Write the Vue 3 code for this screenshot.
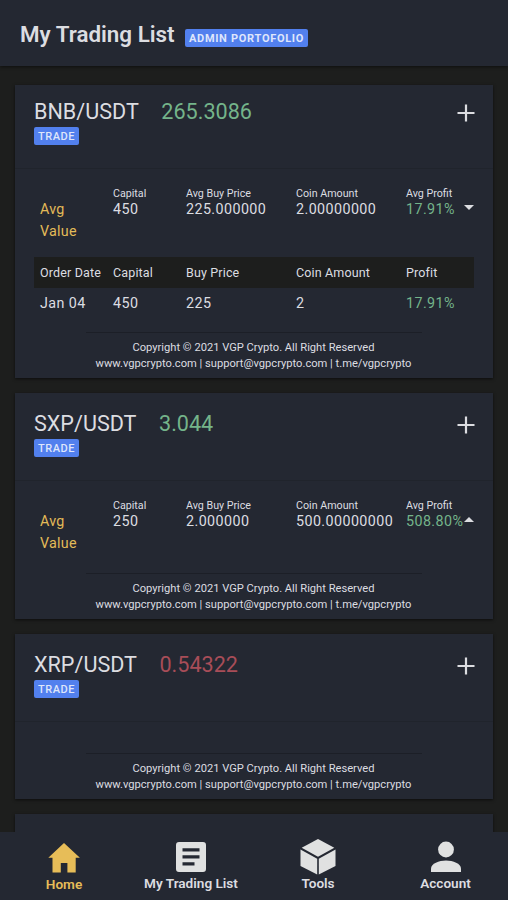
<script setup>
import { ref } from "vue";

const activeTab = ref("home");

const pairs = ref([
  {
    name: "BNB/USDT",
    price: "265.3086",
    trend: "up",
    opened: true,
    avg: { capital: "450", price: "225.000000", amount: "2.00000000", profit: "17.91%" },
    orders: [{ date: "Jan 04", capital: "450", price: "225", amount: "2", profit: "17.91%" }],
  },
  {
    name: "SXP/USDT",
    price: "3.044",
    trend: "up",
    opened: false,
    avg: { capital: "250", price: "2.000000", amount: "500.00000000", profit: "508.80%" },
    orders: [],
  },
  { name: "XRP/USDT", price: "0.54322", trend: "down", opened: false, avg: null, orders: [] },
]);

const tabs = [
  { id: "home", label: "Home" },
  { id: "list", label: "My Trading List" },
  { id: "tools", label: "Tools" },
  { id: "account", label: "Account" },
];

const toggle = (pair) => {
  pair.opened = !pair.opened;
};
</script>

<template>
  <div class="screen">
    <header class="top-bar">
      <h1>My Trading List</h1>
      <span class="badge badge-admin">ADMIN PORTOFOLIO</span>
    </header>

    <main class="list">
      <section v-for="pair in pairs" :key="pair.name" class="card">
        <div class="card-header">
          <div>
            <div class="pair">
              <span class="pair-name">{{ pair.name }}</span>
              <span class="pair-price" :class="pair.trend">{{ pair.price }}</span>
            </div>
            <span class="badge">TRADE</span>
          </div>
          <svg class="plus" viewBox="0 0 18 18">
            <path d="M9 .5v17M.5 9h17" />
          </svg>
        </div>

        <div class="card-body" :class="{ opened: pair.opened, empty: !pair.avg }">
          <div v-if="pair.avg" class="row avg-row" @click="toggle(pair)">
            <div class="avg-title">Avg Value</div>
            <div>
              <small>Capital</small>
              <span>{{ pair.avg.capital }}</span>
            </div>
            <div>
              <small>Avg Buy Price</small>
              <span>{{ pair.avg.price }}</span>
            </div>
            <div>
              <small>Coin Amount</small>
              <span>{{ pair.avg.amount }}</span>
            </div>
            <div class="avg-profit">
              <div>
                <small>Avg Profit</small>
                <span class="up">{{ pair.avg.profit }}</span>
              </div>
              <i class="arrow" :class="{ down: pair.opened }"></i>
            </div>
          </div>

          <template v-if="pair.opened">
            <div class="row orders-head">
              <span>Order Date</span>
              <span>Capital</span>
              <span>Buy Price</span>
              <span>Coin Amount</span>
              <span>Profit</span>
            </div>
            <div v-for="order in pair.orders" :key="order.date" class="row order">
              <span>{{ order.date }}</span>
              <span>{{ order.capital }}</span>
              <span>{{ order.price }}</span>
              <span>{{ order.amount }}</span>
              <span class="up">{{ order.profit }}</span>
            </div>
          </template>
        </div>

        <footer class="card-footer">
          <p class="copyright">Copyright © 2021 VGP Crypto. All Right Reserved</p>
          <p class="links">www.vgpcrypto.com | support@vgpcrypto.com | t.me/vgpcrypto</p>
        </footer>
      </section>

      <section class="card next-card"></section>
    </main>

    <nav class="bottom-nav">
      <a
        v-for="tab in tabs"
        :key="tab.id"
        class="tab"
        :class="[tab.id, { active: activeTab === tab.id }]"
        @click="activeTab = tab.id"
      >
        <svg v-if="tab.id === 'home'" viewBox="0 0 36 36">
          <path d="M18 4 2.300 18.800h4.200V33.500h8.300v-9.600h6.600v9.600h8.300V18.800h4.200z" />
        </svg>
        <svg v-else-if="tab.id === 'list'" viewBox="0 0 36 36">
          <path
            fill-rule="evenodd"
            d="M6 3h24a3 3 0 0 1 3 3v24a3 3 0 0 1-3 3H6a3 3 0 0 1-3-3V6a3 3 0 0 1 3-3zm3.500 6.300v3.200h17V9.300zm0 7v3.200h17v-3.200zm0 7v3.200h12v-3.200z"
          />
        </svg>
        <svg v-else-if="tab.id === 'tools'" viewBox="0 0 36 36">
          <path d="M18 0 34.300 8.700 18 17.800 1.700 8.700z" />
          <path d="M.5 10.500 17.200 19.700V35.500L.5 27z" />
          <path d="M35.500 10.500 18.800 19.700V35.500L35.500 27z" />
        </svg>
        <svg v-else viewBox="0 0 36 36">
          <circle cx="18" cy="10.500" r="7.900" />
          <path d="M3 33v-3.500c0-5 8-8 15-8s15 3 15 8V33z" />
        </svg>
        <span>{{ tab.label }}</span>
      </a>
    </nav>
  </div>
</template>

<style>
body {
  background-color: #1d1e1d;
  overflow: hidden;
}
</style>

<style scoped>
.screen {
  display: flex;
  flex-direction: column;
  height: 900px;
  overflow: hidden;
  background-color: #1d1e1d;
  color: #dcdde1;
  font-family: Roboto, "Liberation Sans", sans-serif;
}

.top-bar {
  display: flex;
  flex: none;
  align-items: flex-start;
  height: 66px;
  box-sizing: border-box;
  padding: 20px 20px 0;
  background-color: #242832;
  box-shadow: 0 1px 3px rgba(0, 0, 0, 0.5);
}

h1 {
  width: 155px;
  margin: 0;
  font-size: 22.4px;
  line-height: 28px;
  font-weight: 600;
  white-space: nowrap;
}

.badge {
  display: block;
  width: 45px;
  height: 18px;
  border-radius: 2px;
  background-color: #5280ee;
  color: #dfe6fb;
  font-size: 11px;
  line-height: 19px;
  font-weight: 500;
  letter-spacing: 0.5px;
  text-align: center;
  white-space: nowrap;
}

.badge-admin {
  width: 123px;
  margin: 9px 0 0 10px;
  font-weight: 700;
  letter-spacing: 0.7px;
}

.list {
  flex: 1;
  min-height: 0;
  overflow: hidden;
  padding: 19px 15px 0;
}

.card {
  margin-bottom: 15px;
  background-color: #242832;
  box-shadow: 0 1px 3px rgba(0, 0, 0, 0.6);
}

.card-header {
  display: flex;
  justify-content: space-between;
  height: 88px;
  box-sizing: border-box;
  padding: 18px 18px 0 19px;
  border-bottom: 1px solid #20242c;
}

.card:first-child .card-header {
  height: 84px;
  padding-top: 14px;
}

.pair {
  display: flex;
  gap: 22.5px;
  font-size: 21.6px;
  line-height: 26px;
  white-space: nowrap;
}

.card-header .badge {
  margin-top: 2px;
}

.up {
  color: #74b48a;
}

.pair-price.down {
  color: #a84d58;
}

.plus {
  width: 18px;
  height: 18px;
  margin-top: 5px;
  fill: none;
  stroke: #dcdde1;
  stroke-width: 2.2;
}

.card-body {
  height: 92px;
  box-sizing: border-box;
  padding: 16px 19px 0;
}

.card-body.opened {
  height: 163px;
}

.card-body.empty {
  height: 31px;
}

.row {
  display: grid;
  grid-template-columns: 73px 73px 110px 110px 1fr;
  padding-left: 6px;
  font-size: 14.3px;
  letter-spacing: 0.42px;
  white-space: nowrap;
}

.avg-row {
  height: 56px;
}

.avg-row small {
  display: block;
  font-size: 10.7px;
  line-height: 17px;
  letter-spacing: 0;
}

.avg-row span {
  display: block;
  line-height: 15px;
}

.avg-title {
  width: 40px;
  padding-top: 13px;
  color: #e3bb58;
  line-height: 22px;
  letter-spacing: 0.25px;
  white-space: normal;
}

.avg-profit {
  display: flex;
  justify-content: space-between;
}

.arrow {
  width: 0;
  height: 0;
  margin: 20px 0 0 -10px;
  border-left: 5px solid transparent;
  border-right: 5px solid transparent;
  border-bottom: 5px solid #dcdde1;
}

.arrow.down {
  border-top: 5px solid #dcdde1;
  border-bottom: 0;
}

.orders-head {
  height: 31px;
  margin-top: 16px;
  background-color: #1d1e1d;
  font-size: 12.5px;
  line-height: 32px;
  letter-spacing: 0.15px;
}

.order {
  line-height: 30px;
}

.card-footer {
  height: 46px;
  box-sizing: border-box;
  padding-top: 8px;
  font-size: 11.15px;
  line-height: 16px;
  text-align: center;
  white-space: nowrap;
}

.card-footer::before {
  content: "";
  display: block;
  width: 336px;
  height: 1px;
  margin: -8px auto 7px;
  background-color: #1c1f27;
}

.card-footer p {
  margin: 0 1px 0 0;
}

.next-card {
  height: 60px;
}

.bottom-nav {
  display: grid;
  flex: none;
  grid-template-columns: repeat(4, 1fr);
  height: 68px;
  background-color: #242832;
}

.tab {
  display: flex;
  flex-direction: column;
  align-items: center;
  padding: 7px 0 0 1px;
  font-size: 13.6px;
  line-height: 16px;
  font-weight: 600;
  white-space: nowrap;
}

.tab.account {
  padding-left: 2px;
}

.tab svg {
  width: 36px;
  height: 36px;
  fill: #e0e1e1;
}

.tab.home span {
  padding-top: 1px;
}

.tab.active {
  color: #e7bd58;
}

.tab.active svg {
  fill: #e7bd58;
}
</style>
